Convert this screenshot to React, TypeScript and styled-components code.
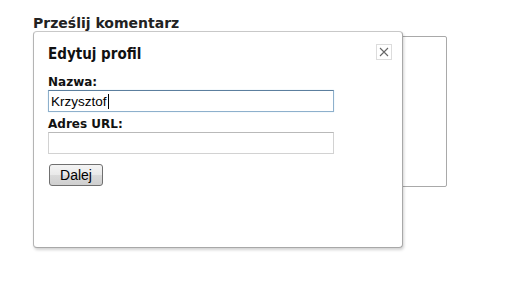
import React from "react";
import styled, { createGlobalStyle } from "styled-components";

const Global = createGlobalStyle`
  html, body { margin: 0; padding: 0; background: #fff; }
  body { font-family: "DejaVu Sans", Verdana, sans-serif; }
`;

const Page = styled.div`
  position: relative;
  padding: 14px 0 0 33px;
  width: 510px;
  height: 281px;
  box-sizing: border-box;
`;

const Heading = styled.h2`
  margin: 0;
  font-size: 14px;
  line-height: 19px;
  font-weight: bold;
  color: #222;
`;

const CommentBox = styled.div`
  margin-top: 3px;
  width: 414px;
  height: 151px;
  box-sizing: border-box;
  border: 1px solid #a9a9a9;
  border-radius: 2px;
`;

const Dialog = styled.div`
  position: absolute;
  left: 33px;
  top: 31px;
  width: 370px;
  height: 217px;
  box-sizing: border-box;
  background: #fff;
  border: 1px solid #c8c8c8;
  border-left-color: #b4b4b4;
  border-right-color: #a8a8a8;
  border-bottom-color: #a8a8a8;
  border-radius: 4px;
  box-shadow: 1px 2px 3px rgba(0, 0, 0, 0.18);
  padding: 13px 14px 0 14px;
  display: flex;
  flex-direction: column;
`;

const Title = styled.h3`
  margin: 0 0 12px 0;
  font-family: "DejaVu Sans Condensed", "DejaVu Sans", sans-serif;
  font-stretch: condensed;
  font-size: 15px;
  line-height: 18px;
  font-weight: bold;
  color: #111;
`;

const Label = styled.label`
  display: block;
  font-size: 12px;
  line-height: 14px;
  font-weight: bold;
  color: #111;
`;

const Field = styled.div<{ $focused?: boolean }>`
  width: 286px;
  height: 22px;
  box-sizing: border-box;
  margin: 1px 0 5px 0;
  border: 1px solid ${(p) => (p.$focused ? "#8eb0cc" : "#d2d2d2")};
  border-top-color: ${(p) => (p.$focused ? "#5c7f9e" : "#b9b9b9")};
  box-shadow: ${(p) => (p.$focused ? "0 0 1px #c4e0f2" : "none")};
  padding: 0 2px;
  display: flex;
  align-items: center;
  font-family: "Liberation Sans", Arial, sans-serif;
  font-size: 13.5px;
  color: #000;
`;

const Caret = styled.span`
  display: inline-block;
  width: 1px;
  height: 15px;
  background: #000;
  margin-left: 1px;
`;

const Button = styled.button`
  margin-top: 5px;
  align-self: flex-start;
  margin-left: 1px;
  width: 54px;
  height: 22px;
  padding: 0;
  border: 1px solid #707070;
  border-radius: 3px;
  background: linear-gradient(#f4f4f4 0%, #e9e9e9 50%, #dadada 51%, #cfcfcf 100%);
  font-family: "Liberation Sans", Arial, sans-serif;
  font-size: 14px;
  color: #000;
`;

const Close = styled.button`
  position: absolute;
  right: 10px;
  top: 12px;
  width: 16px;
  height: 16px;
  padding: 0;
  border: 1px solid #dcdcdc;
  background: #fff;
  display: flex;
  align-items: center;
  justify-content: center;
`;

export default function App() {
  return (
    <>
      <Global />
      <Page>
        <Heading>Prześlij komentarz</Heading>
        <CommentBox />
        <Dialog>
          <Close aria-label="Zamknij">
            <svg width="10" height="10" viewBox="0 0 10 10">
              <path d="M1 1 L9 9 M9 1 L1 9" stroke="#666" strokeWidth="1.1" />
            </svg>
          </Close>
          <Title>Edytuj profil</Title>
          <Label>Nazwa:</Label>
          <Field $focused>
            Krzysztof
            <Caret />
          </Field>
          <Label>Adres URL:</Label>
          <Field />
          <Button>Dalej</Button>
        </Dialog>
      </Page>
    </>
  );
}
